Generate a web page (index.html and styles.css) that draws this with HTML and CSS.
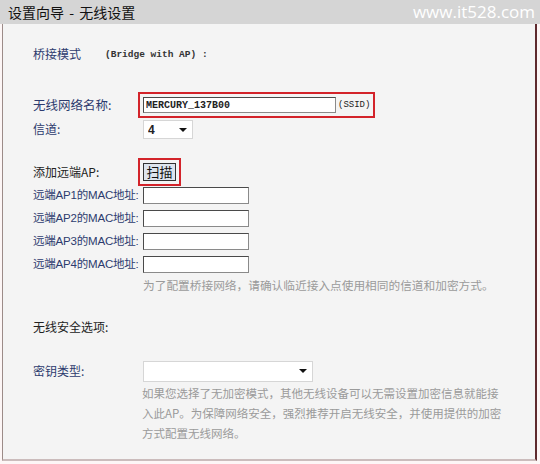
FILE: index.html
```html
<!DOCTYPE html>
<html lang="zh-CN">
<head>
    <meta charset="UTF-8">
    <title>设置向导 - 无线设置</title>
    <link rel="stylesheet" href="styles.css">
</head>
<body>
    <!-- 标题栏 -->
    <div class="titlebar">
        <span class="title">设置向导 - 无线设置</span>
        <span class="watermark">www.it528.com</span>
    </div>

    <div class="panel">
        <!-- 桥接模式 -->
        <div class="row mode-row">
            <span class="mode-label">桥接模式</span>
            <span class="mode-en">(Bridge with AP) :</span>
        </div>

        <!-- 基本设置 -->
        <div class="group group-basic">
            <div class="row">
                <label class="label label-wide" for="ssid">无线网络名称:</label>
                <span class="mark">
                    <input type="text" id="ssid" class="field field-ssid" value="MERCURY_137B00">
                    <span class="unit">(SSID)</span>
                </span>
            </div>
            <div class="row">
                <label class="label" for="channel">信道:</label>
                <span class="select-box select-small">
                    <select id="channel" class="select">
                        <option>4</option>
                    </select>
                </span>
            </div>
        </div>

        <!-- 远端AP -->
        <div class="group group-ap">
            <div class="row">
                <span class="label label-dark">添加远端AP:</span>
                <span class="mark">
                    <button type="button" class="scan-btn">扫描</button>
                </span>
            </div>
            <div class="row">
                <label class="label label-mac">远端AP1的MAC地址:</label>
                <input type="text" class="field field-mac">
            </div>
            <div class="row">
                <label class="label label-mac">远端AP2的MAC地址:</label>
                <input type="text" class="field field-mac">
            </div>
            <div class="row">
                <label class="label label-mac">远端AP3的MAC地址:</label>
                <input type="text" class="field field-mac">
            </div>
            <div class="row">
                <label class="label label-mac">远端AP4的MAC地址:</label>
                <input type="text" class="field field-mac">
            </div>
            <p class="hint">为了配置桥接网络，请确认临近接入点使用相同的信道和加密方式。</p>
        </div>

        <!-- 无线安全 -->
        <div class="group group-security">
            <div class="row">
                <span class="label label-dark">无线安全选项:</span>
            </div>
        </div>

        <div class="group group-key">
            <div class="row">
                <label class="label" for="keytype">密钥类型:</label>
                <span class="select-box select-large">
                    <select id="keytype" class="select">
                        <option></option>
                    </select>
                </span>
            </div>
            <p class="note">如果您选择了无加密模式，其他无线设备可以无需设置加密信息就能接<br>入此AP。为保障网络安全，强烈推荐开启无线安全，并使用提供的加密<br>方式配置无线网络。</p>
        </div>
    </div>
</body>
</html>
```

FILE: styles.css
```css
* {
    margin: 0;
    padding: 0;
    box-sizing: border-box;
}

body {
    font-family: "Noto Sans CJK SC", "Liberation Sans", sans-serif;
    font-size: 12px;
    background-color: #fdf6f6;
    width: 540px;
    height: 464px;
    overflow: hidden;
}

/* 标题栏 */
.titlebar {
    height: 24px;
    background-color: #d5d5d5;
    display: flex;
    align-items: center;
    justify-content: space-between;
    padding: 0 5px 0 8px;
}

.title {
    font-size: 14px;
    color: #111;
    line-height: 24px;
    word-spacing: 2px;
}

.watermark {
    font-family: "Open Sans", "Liberation Sans", sans-serif;
    font-size: 17px;
    color: #fff;
    line-height: 24px;
}

.panel {
    margin-left: 2px;
    width: 535px;
    background-color: #f4f4f4;
    border-left: 1px solid #9c8b88;
    border-right: 2px solid #5e2a2e;
    border-bottom: 2px solid #cbbcbc;
    padding: 19px 0 16px 30px;
}

.row {
    display: flex;
    align-items: center;
    height: 22px;
}

.label {
    width: 110px;
    flex-shrink: 0;
    color: #2d3b6e;
    line-height: 22px;
}

.label-wide {
    font-size: 12.5px;
}

.label-dark {
    color: #222;
}

.label-mac {
    font-family: "Liberation Sans", "Noto Sans CJK SC", sans-serif;
    font-size: 11.5px;
    letter-spacing: -0.2px;
}

/* 桥接模式 */
.mode-label {
    width: 72px;
    color: #2d3b6e;
    line-height: 22px;
}

.mode-en {
    font-family: "Liberation Mono", monospace;
    font-size: 9.5px;
    font-weight: bold;
    color: #333;
}

.group-basic {
    margin-top: 29px;
}

.group-basic .row + .row {
    margin-top: 2px;
}

.group-ap {
    margin-top: 21px;
}

.group-ap .row + .row {
    margin-top: 1px;
}

.group-security {
    margin-top: 21px;
}

.group-key {
    margin-top: 22px;
}

/* 红色标注框 */
.mark {
    display: inline-flex;
    align-items: center;
    outline: 2px solid #d3232a;
    outline-offset: 3px;
}

.field {
    height: 17px;
    background-color: #fff;
    border: 1px solid #8a8a8a;
    border-top-color: #4a4a4a;
    border-left-color: #4a4a4a;
    font-family: "Liberation Mono", monospace;
    font-size: 10px;
    font-weight: bold;
    color: #222;
    padding: 0 2px;
}

.field-ssid {
    width: 193px;
    height: 16px;
}

.field-mac {
    width: 106px;
}

.unit {
    font-family: "Liberation Mono", monospace;
    font-size: 9px;
    color: #222;
    margin-left: 2px;
}

.scan-btn {
    width: 33px;
    height: 18px;
    background-color: #dde4ed;
    border: 1px solid #333;
    font-family: "Noto Sans CJK SC", sans-serif;
    font-size: 13px;
    line-height: 14px;
    color: #111;
}

/* 下拉框 */
.select-box {
    position: relative;
    display: inline-block;
}

.select {
    appearance: none;
    -webkit-appearance: none;
    width: 100%;
    height: 100%;
    background-color: #fff;
    border: 1px solid #d6d6d6;
    font-family: "Liberation Sans", sans-serif;
    font-size: 12px;
    font-weight: bold;
    color: #222;
    padding-left: 4px;
    outline: none;
}

.select-box::after {
    content: "";
    position: absolute;
    right: 6px;
    top: 8px;
    border-left: 4px solid transparent;
    border-right: 4px solid transparent;
    border-top: 4px solid #111;
}

.select-small {
    width: 50px;
    height: 19px;
}

.select-large {
    width: 170px;
    height: 21px;
}

.hint {
    margin-left: 110px;
    height: 20px;
    line-height: 20px;
    font-size: 11.7px;
    color: #9a9a9a;
}

.note {
    margin: 1px 0 0 109px;
    font-size: 11.5px;
    line-height: 20px;
    color: #9a9a9a;
}
```
